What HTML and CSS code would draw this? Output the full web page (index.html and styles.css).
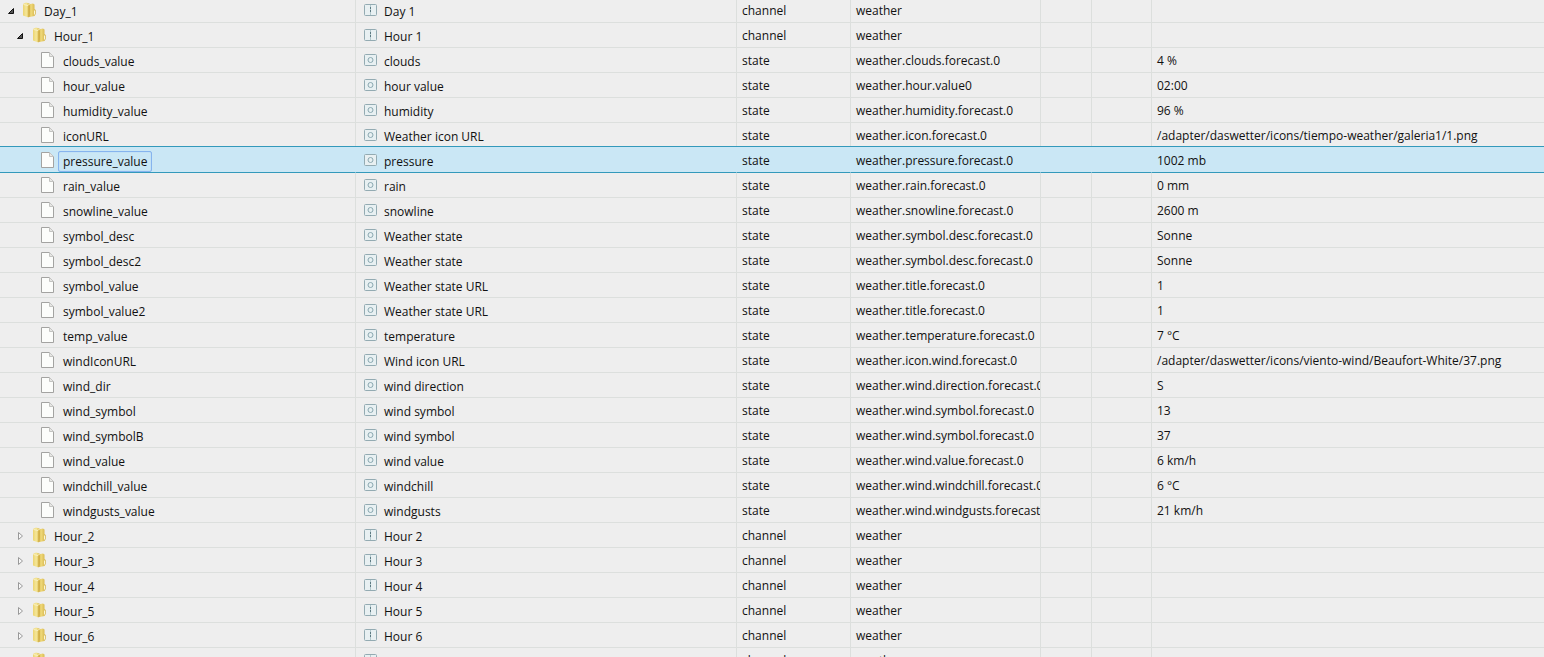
FILE: index.html
```
<!DOCTYPE html>
<html lang="en">
<head>
<meta charset="utf-8">
<title>Objects</title>
<link rel="stylesheet" href="styles.css">
</head>
<body>
<svg class="sprite" aria-hidden="true">
  <defs>
    <linearGradient id="gold" x1="0" x2="1" y1="0" y2="0">
      <stop offset="0" stop-color="#ecd470"/><stop offset=".5" stop-color="#f5e79a"/><stop offset="1" stop-color="#dcbb4a"/>
    </linearGradient>
    <linearGradient id="gold-dark" x1="0" x2="1" y1="0" y2="0">
      <stop offset="0" stop-color="#cfab3c"/><stop offset=".4" stop-color="#efd97a"/><stop offset="1" stop-color="#d2b044"/>
    </linearGradient>
  </defs>
  <symbol id="folder" viewBox="0 0 16 16">
    <path d="M7 2.500 12 1.500l1.500 1v4.500l1.200 1v4l-1.200 2-5 1z" fill="url(#gold-dark)"/>
    <path d="M2 2 5 .5 8.500 1.500v12.500l-1 1.500L2 13.500z" fill="url(#gold)"/>
    <path d="M2.500 2.500 7 3.500l1.500-1.500" fill="none" stroke="#f9f1c4"/>
    <path d="M8 3.500v11.500" stroke="#c9a33a" fill="none"/>
    <path d="M13.500 8.500v4" stroke="#fbf5d6" fill="none"/>
  </symbol>
  <symbol id="file" viewBox="0 0 16 16">
    <path d="M1.500.5h8l4 4v11h-12z" fill="#fcfdfb" stroke="#a3a3a1"/>
    <path d="M9.500.5v4h4" fill="#e7e7e5" stroke="#c3c3c1"/>
  </symbol>
  <symbol id="channel" viewBox="0 0 13 12">
    <rect x=".5" y=".5" width="12" height="11" rx="1" fill="#e8f0f2" stroke="#93abb2"/>
    <path d="M6.500 1v10" stroke="#b3c8cd"/>
    <path d="M6.500 3v2M6.500 6v2" stroke="#5d7a82"/>
  </symbol>
  <symbol id="state" viewBox="0 0 13 12">
    <rect x=".5" y=".5" width="12" height="11" rx="1" fill="#e8f0f2" stroke="#93abb2"/>
    <circle cx="6.500" cy="6" r="2.500" fill="none" stroke="#8aa8b0"/>
  </symbol>
  <symbol id="open" viewBox="0 0 8 8"><path d="M6.500 1.500v5h-5z" fill="#555" stroke="#111"/></symbol>
  <symbol id="closed" viewBox="0 0 8 8"><path d="M2.500 .5v7L6.500 4z" fill="#f8f8f8" stroke="#999"/></symbol>
</svg>
<table class="tree">
  <colgroup><col class="c-id"><col class="c-name"><col class="c-type"><col class="c-role"><col class="c-room"><col class="c-func"><col></colgroup>
  <tbody>
    <tr><td><div class="node"><button class="toggle" aria-label="Collapse Day_1"><svg><use href="#open"/></svg></button><svg class="icon"><use href="#folder"/></svg><span class="title">Day_1</span></div></td><td><div class="name"><svg class="kind"><use href="#channel"/></svg>Day 1</div></td><td>channel</td><td>weather</td><td></td><td></td><td></td></tr>
    <tr><td><div class="node l1"><button class="toggle" aria-label="Collapse Hour_1"><svg><use href="#open"/></svg></button><svg class="icon"><use href="#folder"/></svg><span class="title">Hour_1</span></div></td><td><div class="name"><svg class="kind"><use href="#channel"/></svg>Hour 1</div></td><td>channel</td><td>weather</td><td></td><td></td><td></td></tr>
    <tr><td><div class="node l2"><svg class="icon"><use href="#file"/></svg><span class="title">clouds_value</span></div></td><td><div class="name"><svg class="kind"><use href="#state"/></svg>clouds</div></td><td>state</td><td>weather.clouds.forecast.0</td><td></td><td></td><td>4 %</td></tr>
    <tr><td><div class="node l2"><svg class="icon"><use href="#file"/></svg><span class="title">hour_value</span></div></td><td><div class="name"><svg class="kind"><use href="#state"/></svg>hour value</div></td><td>state</td><td>weather.hour.value0</td><td></td><td></td><td>02:00</td></tr>
    <tr><td><div class="node l2"><svg class="icon"><use href="#file"/></svg><span class="title">humidity_value</span></div></td><td><div class="name"><svg class="kind"><use href="#state"/></svg>humidity</div></td><td>state</td><td>weather.humidity.forecast.0</td><td></td><td></td><td>96 %</td></tr>
    <tr><td><div class="node l2"><svg class="icon"><use href="#file"/></svg><span class="title">iconURL</span></div></td><td><div class="name"><svg class="kind"><use href="#state"/></svg>Weather icon URL</div></td><td>state</td><td>weather.icon.forecast.0</td><td></td><td></td><td>/adapter/daswetter/icons/tiempo-weather/galeria1/1.png</td></tr>
    <tr class="selected"><td><div class="node l2"><svg class="icon"><use href="#file"/></svg><span class="title">pressure_value</span></div></td><td><div class="name"><svg class="kind"><use href="#state"/></svg>pressure</div></td><td>state</td><td>weather.pressure.forecast.0</td><td></td><td></td><td>1002 mb</td></tr>
    <tr><td><div class="node l2"><svg class="icon"><use href="#file"/></svg><span class="title">rain_value</span></div></td><td><div class="name"><svg class="kind"><use href="#state"/></svg>rain</div></td><td>state</td><td>weather.rain.forecast.0</td><td></td><td></td><td>0 mm</td></tr>
    <tr><td><div class="node l2"><svg class="icon"><use href="#file"/></svg><span class="title">snowline_value</span></div></td><td><div class="name"><svg class="kind"><use href="#state"/></svg>snowline</div></td><td>state</td><td>weather.snowline.forecast.0</td><td></td><td></td><td>2600 m</td></tr>
    <tr><td><div class="node l2"><svg class="icon"><use href="#file"/></svg><span class="title">symbol_desc</span></div></td><td><div class="name"><svg class="kind"><use href="#state"/></svg>Weather state</div></td><td>state</td><td>weather.symbol.desc.forecast.0</td><td></td><td></td><td>Sonne</td></tr>
    <tr><td><div class="node l2"><svg class="icon"><use href="#file"/></svg><span class="title">symbol_desc2</span></div></td><td><div class="name"><svg class="kind"><use href="#state"/></svg>Weather state</div></td><td>state</td><td>weather.symbol.desc.forecast.0</td><td></td><td></td><td>Sonne</td></tr>
    <tr><td><div class="node l2"><svg class="icon"><use href="#file"/></svg><span class="title">symbol_value</span></div></td><td><div class="name"><svg class="kind"><use href="#state"/></svg>Weather state URL</div></td><td>state</td><td>weather.title.forecast.0</td><td></td><td></td><td>1</td></tr>
    <tr><td><div class="node l2"><svg class="icon"><use href="#file"/></svg><span class="title">symbol_value2</span></div></td><td><div class="name"><svg class="kind"><use href="#state"/></svg>Weather state URL</div></td><td>state</td><td>weather.title.forecast.0</td><td></td><td></td><td>1</td></tr>
    <tr><td><div class="node l2"><svg class="icon"><use href="#file"/></svg><span class="title">temp_value</span></div></td><td><div class="name"><svg class="kind"><use href="#state"/></svg>temperature</div></td><td>state</td><td>weather.temperature.forecast.0</td><td></td><td></td><td>7 °C</td></tr>
    <tr><td><div class="node l2"><svg class="icon"><use href="#file"/></svg><span class="title">windIconURL</span></div></td><td><div class="name"><svg class="kind"><use href="#state"/></svg>Wind icon URL</div></td><td>state</td><td>weather.icon.wind.forecast.0</td><td></td><td></td><td>/adapter/daswetter/icons/viento-wind/Beaufort-White/37.png</td></tr>
    <tr><td><div class="node l2"><svg class="icon"><use href="#file"/></svg><span class="title">wind_dir</span></div></td><td><div class="name"><svg class="kind"><use href="#state"/></svg>wind direction</div></td><td>state</td><td>weather.wind.direction.forecast.0</td><td></td><td></td><td>S</td></tr>
    <tr><td><div class="node l2"><svg class="icon"><use href="#file"/></svg><span class="title">wind_symbol</span></div></td><td><div class="name"><svg class="kind"><use href="#state"/></svg>wind symbol</div></td><td>state</td><td>weather.wind.symbol.forecast.0</td><td></td><td></td><td>13</td></tr>
    <tr><td><div class="node l2"><svg class="icon"><use href="#file"/></svg><span class="title">wind_symbolB</span></div></td><td><div class="name"><svg class="kind"><use href="#state"/></svg>wind symbol</div></td><td>state</td><td>weather.wind.symbol.forecast.0</td><td></td><td></td><td>37</td></tr>
    <tr><td><div class="node l2"><svg class="icon"><use href="#file"/></svg><span class="title">wind_value</span></div></td><td><div class="name"><svg class="kind"><use href="#state"/></svg>wind value</div></td><td>state</td><td>weather.wind.value.forecast.0</td><td></td><td></td><td>6 km/h</td></tr>
    <tr><td><div class="node l2"><svg class="icon"><use href="#file"/></svg><span class="title">windchill_value</span></div></td><td><div class="name"><svg class="kind"><use href="#state"/></svg>windchill</div></td><td>state</td><td>weather.wind.windchill.forecast.0</td><td></td><td></td><td>6 °C</td></tr>
    <tr><td><div class="node l2"><svg class="icon"><use href="#file"/></svg><span class="title">windgusts_value</span></div></td><td><div class="name"><svg class="kind"><use href="#state"/></svg>windgusts</div></td><td>state</td><td>weather.wind.windgusts.forecast.0</td><td></td><td></td><td>21 km/h</td></tr>
    <tr><td><div class="node l1"><button class="toggle" aria-label="Expand Hour_2"><svg><use href="#closed"/></svg></button><svg class="icon"><use href="#folder"/></svg><span class="title">Hour_2</span></div></td><td><div class="name"><svg class="kind"><use href="#channel"/></svg>Hour 2</div></td><td>channel</td><td>weather</td><td></td><td></td><td></td></tr>
    <tr><td><div class="node l1"><button class="toggle" aria-label="Expand Hour_3"><svg><use href="#closed"/></svg></button><svg class="icon"><use href="#folder"/></svg><span class="title">Hour_3</span></div></td><td><div class="name"><svg class="kind"><use href="#channel"/></svg>Hour 3</div></td><td>channel</td><td>weather</td><td></td><td></td><td></td></tr>
    <tr><td><div class="node l1"><button class="toggle" aria-label="Expand Hour_4"><svg><use href="#closed"/></svg></button><svg class="icon"><use href="#folder"/></svg><span class="title">Hour_4</span></div></td><td><div class="name"><svg class="kind"><use href="#channel"/></svg>Hour 4</div></td><td>channel</td><td>weather</td><td></td><td></td><td></td></tr>
    <tr><td><div class="node l1"><button class="toggle" aria-label="Expand Hour_5"><svg><use href="#closed"/></svg></button><svg class="icon"><use href="#folder"/></svg><span class="title">Hour_5</span></div></td><td><div class="name"><svg class="kind"><use href="#channel"/></svg>Hour 5</div></td><td>channel</td><td>weather</td><td></td><td></td><td></td></tr>
    <tr><td><div class="node l1"><button class="toggle" aria-label="Expand Hour_6"><svg><use href="#closed"/></svg></button><svg class="icon"><use href="#folder"/></svg><span class="title">Hour_6</span></div></td><td><div class="name"><svg class="kind"><use href="#channel"/></svg>Hour 6</div></td><td>channel</td><td>weather</td><td></td><td></td><td></td></tr>
    <tr><td><div class="node l1"><button class="toggle" aria-label="Expand Hour_7"><svg><use href="#closed"/></svg></button><svg class="icon"><use href="#folder"/></svg><span class="title">Hour_7</span></div></td><td><div class="name"><svg class="kind"><use href="#channel"/></svg>Hour 7</div></td><td>channel</td><td>weather</td><td></td><td></td><td></td></tr>
  </tbody>
</table>
</body>
</html>
```
FILE: styles.css
```
* { box-sizing: border-box; }
body {
  margin: 0;
  height: 100vh;
  overflow: hidden;
  background: #eee;
  color: #111;
  font: 12px/20px "Segoe UI", "Open Sans", "Noto Sans", sans-serif;
}
.sprite { position: absolute; width: 0; height: 0; }
.tree {
  width: 100%;
  margin-top: -2px;
  table-layout: fixed;
  border-collapse: separate;
  border-spacing: 0;
}
.c-id { width: 356px; }
.c-name { width: 381px; }
.c-type { width: 114px; }
.c-role { width: 190px; }
.c-room { width: 51px; }
.c-func { width: 60px; }
td {
  height: 25px;
  padding: 2px 0 0 5px;
  border: 0 solid #dcdfdd;
  border-width: 0 1px 1px 0;
  white-space: nowrap;
  overflow: hidden;
  vertical-align: middle;
}
td:first-child { padding: 0; }
td:nth-child(2) { padding: 0 0 0 8px; }
td:last-child { border-right: 0; }
.node, .name { display: flex; align-items: center; height: 24px; padding-top: 2px; }
.name { padding-top: 4px; }
.node { padding-left: 7px; }
.node.l1 { padding-left: 16px; }
.node.l2 { padding-left: 40px; }
.toggle {
  width: 8px;
  height: 8px;
  margin-right: 6px;
  padding: 0;
  border: 0;
  background: none;
}
.l1 .toggle { margin-right: 7px; }
.toggle svg { display: block; width: 8px; height: 8px; }
.icon { width: 16px; height: 16px; margin-bottom: 2px; }
.title { margin-left: 2px; padding: 0 4px; border: 1px solid transparent; line-height: 19px; }
.kind { width: 13px; height: 12px; margin: 0 7px 4px 0; }
.selected td {
  position: relative;
  background: #cae7f5;
  border-color: #cae7f5;
  border-bottom-color: #3399bb;
  box-shadow: 0 -1px #cae7f5, 0 -2px #3399bb;
}
.selected .title { border: 1px solid #86b4ee; border-radius: 2px; box-shadow: inset 0 0 1px #86b4ee; }
```
